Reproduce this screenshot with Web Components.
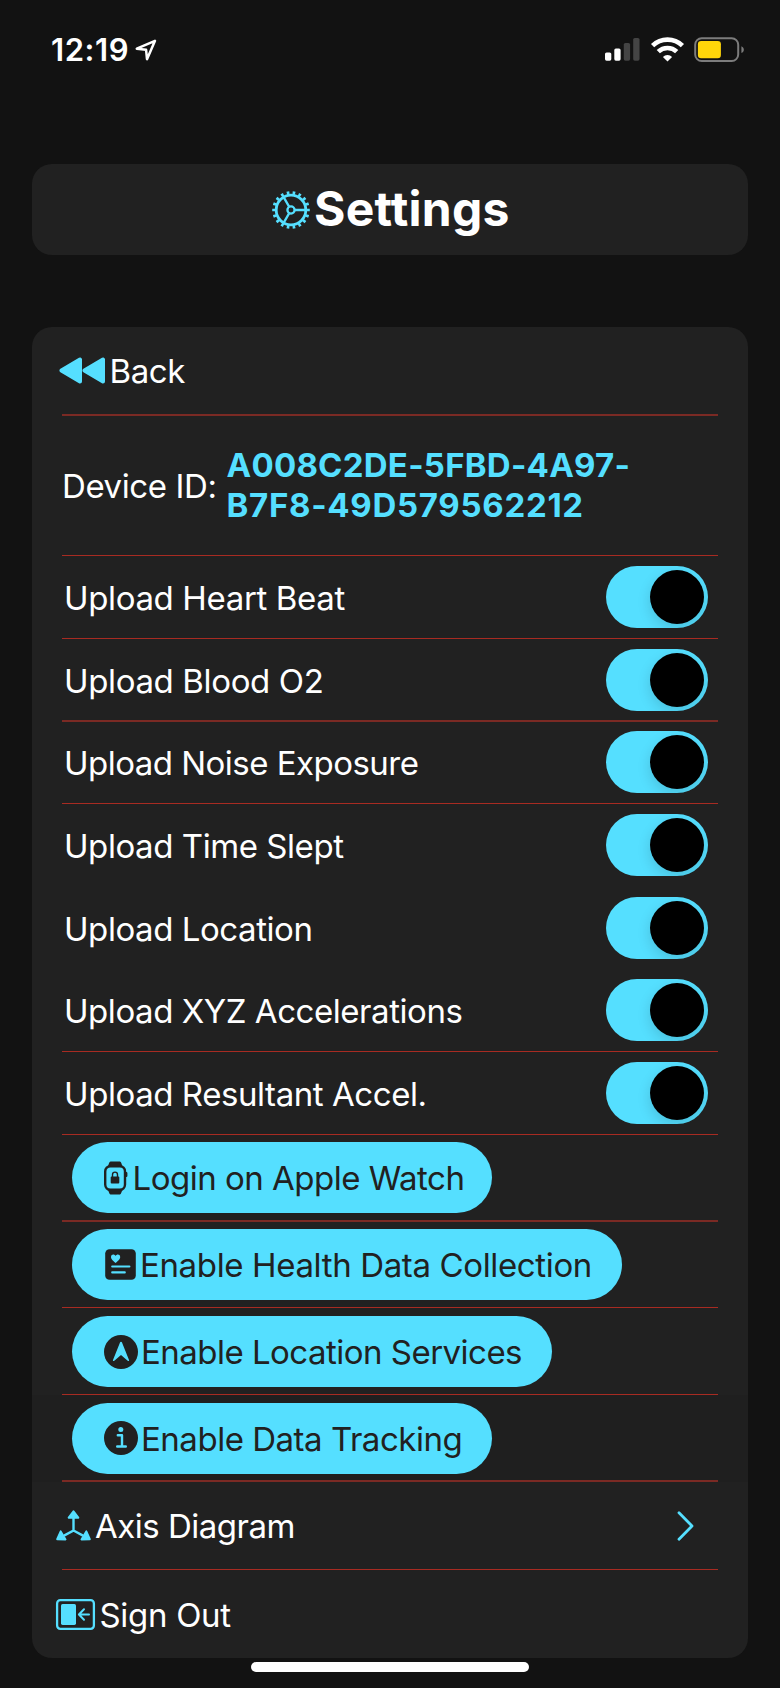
<!DOCTYPE html>
<html lang="en">
<head>
<meta charset="utf-8">
<title>Settings</title>
<style>
body{margin:0;background:#121212;font-family:Inter,"Liberation Sans",sans-serif;color:#fff}
</style>
</head>
<body>
<settings-screen></settings-screen>
<script>
const define = (name, markup) => customElements.define(name, class extends HTMLElement {
  connectedCallback() {
    if (this.shadowRoot) return;
    const root = this.attachShadow({mode: 'open'});
    const t = document.createElement('template');
    t.innerHTML = typeof markup === 'function' ? markup(this) : markup;
    root.append(t.content.cloneNode(true));
  }
});

// name: [width, height, svg body]; one user unit is one pixel
const ICONS = {
  location: [22, 22, '<path d="M20 1.8 1.8 9.7 11.1 10.8 12 20.2Z" fill="none" stroke="currentColor" stroke-width="2.5" stroke-linejoin="round"/>'],
  signal: [35, 23, '<rect x="0" y="14.5" width="6.3" height="8.2" rx="1.6"/><rect x="9.3" y="10.5" width="6.3" height="12.2" rx="1.6"/><g fill="#444"><rect x="18.8" y="5" width="6.3" height="17.7" rx="1.6"/><rect x="28.2" y="0" width="6.3" height="22.7" rx="1.6"/></g>'],
  wifi: [33, 25, '<g fill="none" stroke="currentColor" stroke-width="4.6"><path d="M1.6 8.7a21.3 21.3 0 0 1 29.8 0"/><path d="M7.3 14.7a13.2 13.2 0 0 1 18.4 0"/></g><path d="M16.5 24.6 11.9 19.9a6.8 6.8 0 0 1 9.2 0Z"/>'],
  battery: [51, 26, '<rect x="1.2" y="1.2" width="43" height="22.8" rx="6.5" fill="none" stroke="#7c7c7c" stroke-width="2"/><rect x="3.9" y="4" width="23" height="17.2" rx="3.2" fill="#ffd60a"/><path d="M47.4 9.2v6.9c3.3-1.4 3.3-5.5 0-6.9Z" fill="#7c7c7c"/>'],
  gear: [38, 38, '<g fill="none" stroke="currentColor"><circle cx="19" cy="19" r="14.8" stroke-width="2.8"/><circle cx="19" cy="19" r="17.2" stroke-width="3.2" pathLength="180" stroke-dasharray="4.4 5.6" stroke-dashoffset="2.2"/><circle cx="19" cy="19" r="3.6" stroke-width="2.3"/><path d="M22.8 19H34M17.1 15.7 11.6 6.2M17.1 22.3 11.6 31.8" stroke-width="2.3"/></g>'],
  rewind: [46, 27, '<g stroke="currentColor" stroke-width="4" stroke-linejoin="round"><path d="M2.4 13.5 21 2.6v21.8Z"/><path d="M25.4 13.5 44 2.6v21.8Z"/></g>'],
  watch: [24, 34, '<path d="M6.5.6h9.4c1.3 0 1.5 2.4 2.8 5.1H3.7C5 3 5.2.6 6.5.6ZM3.7 28.3h15c-1.3 2.7-1.5 5.1-2.8 5.1H6.5c-1.3 0-1.5-2.4-2.8-5.1Z"/><rect x="1.2" y="5.2" width="19.8" height="23.6" rx="5.2" fill="none" stroke="currentColor" stroke-width="2.4"/><rect x="21.2" y="11" width="2.2" height="5" rx="1"/><rect x="6.7" y="15.6" width="8.6" height="6.9" rx="1"/><path d="M8.5 16v-2.3c0-3.4 5-3.4 5 0V16" fill="none" stroke="currentColor" stroke-width="1.4"/>'],
  health: [31, 31, '<rect x=".2" y=".2" width="30.6" height="30.6" rx="4.3"/><g stroke="#55dfff" stroke-width="2.1" stroke-linecap="round"><path d="M7.2 17.5h17.2M7.2 23.4h12.6"/></g><path d="M10.6 13.9C7 11.2 6 9.6 6 8c0-2.8 3.5-3.3 4.6-.9 1.1-2.4 4.6-1.9 4.6.9 0 1.6-1 3.2-4.6 5.9Z" fill="#55dfff"/>'],
  locate: [34, 34, '<circle cx="17" cy="17" r="17"/><path d="M17 6.8c.5 0 .8.3 1 .8l7 17.3c.4 1-.5 1.6-1.3.9L17 20l-6.7 5.8c-.8.7-1.7.1-1.3-.9L16 7.600c.2-.5.5-.8 1-.8Z" fill="#55dfff"/>'],
  info: [34, 34, '<circle cx="17" cy="17" r="17"/><circle cx="16.8" cy="8.6" r="2.5" fill="#55dfff"/><path d="M13.8 14.200h4.200v11.300M13.200 25.500h8.600" fill="none" stroke="#55dfff" stroke-width="2.4" stroke-linecap="round" stroke-linejoin="round"/>'],
  axis: [36, 31, '<path d="M17.5 8v12.5L8 25.6M17.5 20.5 27 25.6" fill="none" stroke="currentColor" stroke-width="2.4"/><g stroke="currentColor" stroke-width="2" stroke-linejoin="round"><path d="M17.5 1.3 12.700 7.700h9.600Z"/><path d="M1.200 29.200 4.700 21.400 9.500 29.500Z"/><path d="M33.800 29.200 30.300 21.400 25.500 29.500Z"/></g>'],
  signout: [39, 31, '<rect x="1.100" y="1.200" width="36.800" height="28.600" rx="3.200" fill="none" stroke="currentColor" stroke-width="2.300"/><rect x="5" y="5.100" width="15" height="20.800" rx="1.600"/><path d="M33 15.500H23.300M28 10.300 22.900 15.500 28 20.700" fill="none" stroke="currentColor" stroke-width="2" stroke-linecap="round" stroke-linejoin="round"/>'],
  chevron: [18, 30, '<path d="M2 1.800 15 15 2 28.200" fill="none" stroke="currentColor" stroke-width="2.800" stroke-linecap="round" stroke-linejoin="round"/>']
};

define('ui-icon', el => {
  const [w, h, body] = ICONS[el.getAttribute('name')];
  return `<style>:host{display:block;flex:none;width:${w}px;height:${h}px}svg{display:block;overflow:visible}</style>
  <svg width="${w}" height="${h}" viewBox="0 0 ${w} ${h}" fill="currentColor">${body}</svg>`;
});

define('status-bar', `<style>
  :host{display:flex;box-sizing:border-box;height:164px;padding:32px 35px 0 51px;align-items:flex-start}
  .time{font-size:31px;font-weight:600;letter-spacing:.6px;line-height:36px;width:84px;white-space:nowrap}
  .loc{margin-top:7px}
  .right{display:flex;margin-left:auto;margin-top:5px}
  .sig{margin-top:1px}.wifi{margin-left:10.5px}.bat{margin-left:10.5px}
  </style>
  <div class="time">12:19</div><ui-icon class="loc" name="location"></ui-icon>
  <div class="right"><ui-icon class="sig" name="signal"></ui-icon><ui-icon class="wifi" name="wifi"></ui-icon><ui-icon class="bat" name="battery"></ui-icon></div>`);

define('title-card', `<style>
  :host{display:flex;align-items:center;box-sizing:border-box;height:91px;margin:0 32px 72px;padding-left:240px;background:#212121;border-radius:20px}
  ui-icon{color:#55dfff}
  h1{margin:-2px 0 0 4px;font-size:48px;line-height:58px;font-weight:700;letter-spacing:.25px}
  </style><ui-icon name="gear"></ui-icon><h1><slot></slot></h1>`);

define('settings-card', `<style>
  :host{display:block;box-sizing:border-box;height:1331px;margin:0 32px;background:#212121;border-radius:20px;overflow:hidden}
  </style><slot></slot>`);

// Row shell shared by every list entry; the rule is inset 30px from the card edges
const ROW = `:host{display:block;box-sizing:border-box;padding:0 30px;height:var(--h)}
  .row{display:flex;align-items:center;box-sizing:border-box;height:100%;border-bottom:var(--rule,0 solid transparent)}
  .label{font-size:33px;line-height:40px;white-space:nowrap;letter-spacing:var(--ls)}`;

define('nav-row', el => `<style>${ROW}
  ui-icon{color:#55dfff;margin-left:var(--ix);margin-top:var(--iy,0)}
  .label{margin-left:var(--gap);margin-top:var(--ty,0)}
  .go{margin-left:auto;margin-right:23px;margin-top:0}
  </style><div class="row"><ui-icon name="${el.getAttribute('icon')}"></ui-icon><span class="label"><slot></slot></span>${el.hasAttribute('chevron') ? '<ui-icon class="go" name="chevron"></ui-icon>' : ''}</div>`);

define('device-row', `<style>${ROW}
  .id{margin:-1px 0 0 10px;color:#55dfff;font-size:33px;line-height:40px;font-weight:700;white-space:nowrap}
  .id div:first-child{letter-spacing:.24px}.id div:last-child{letter-spacing:.7px}
  </style><div class="row"><span class="label">Device ID:</span><div class="id"><div>A008C2DE-5FBD-4A97-</div><div>B7F8-49D579562212</div></div></div>`);

define('toggle-switch', `<style>
  :host{display:flex;flex:none;box-sizing:border-box;justify-content:flex-end;padding:4px;width:102px;height:62px;border-radius:31px;background:#55dfff;overflow:hidden}
  i{display:block;width:54px;height:54px;border-radius:50%;background:#000;box-shadow:0 5px 14px rgba(0,0,0,.14)}
  </style><i></i>`);

define('toggle-row', `<style>${ROW}
  .row{align-items:flex-start;padding:var(--pt,10px) 10px 0 2px;justify-content:space-between}
  .label{margin-top:12px}
  </style><div class="row"><span class="label"><slot></slot></span><toggle-switch></toggle-switch></div>`);

define('button-row', el => `<style>${ROW}
  .row{align-items:flex-start;padding:var(--pt,7px) 10px 0}
  button{display:flex;align-items:center;box-sizing:border-box;height:71px;width:var(--w);padding:0 0 0 var(--px,32px);border:0;border-radius:35.5px;background:#55dfff;color:#212121;font:inherit}
  .label{margin-left:var(--gap)}
  ui-icon{margin-top:var(--iy,0)}
  </style><div class="row"><button><ui-icon name="${el.getAttribute('icon')}"></ui-icon><span class="label"><slot></slot></span></button></div>`);

define('home-indicator', `<style>:host{display:block;width:278px;height:10px;margin:4px auto 0;border-radius:5px;background:#fff}</style>`);

define('settings-screen', `<style>
  :host{display:block;width:780px;height:1688px;overflow:hidden;background:#121212}
  .a{--rule:1px solid #a82b22}.b{--rule:2px solid #7b2a24}
  .dim{background:#1f1f1f}
  </style>
  <status-bar></status-bar>
  <title-card>Settings</title-card>
  <settings-card>
    <nav-row class="b" icon="rewind" style="--h:89px;--ix:-3px;--gap:4.5px;--ls:-.4px;--ty:1px">Back</nav-row>
    <device-row class="a" style="--h:140px;--ls:-.4px"></device-row>
    <toggle-row class="a" style="--h:83px;--ls:-.36px">Upload Heart Beat</toggle-row>
    <toggle-row class="b" style="--h:83px;--ls:-.36px">Upload Blood O2</toggle-row>
    <toggle-row class="a" style="--h:82px;--ls:-.52px;--pt:9px">Upload Noise Exposure</toggle-row>
    <toggle-row style="--h:82px;--ls:-.44px">Upload Time Slept</toggle-row>
    <toggle-row style="--h:83px;--ls:-.44px;--pt:11px">Upload Location</toggle-row>
    <toggle-row class="a" style="--h:83px;--ls:-.45px">Upload XYZ Accelerations</toggle-row>
    <toggle-row class="a" style="--h:83px;--ls:-.43px">Upload Resultant Accel.</toggle-row>
    <button-row class="b" icon="watch" style="--h:87px;--w:420px;--ls:-.5px;--gap:4.5px">Login on Apple Watch</button-row>
    <button-row class="a" icon="health" style="--h:86px;--w:550px;--ls:-.36px;--gap:4px;--px:33px">Enable Health Data Collection</button-row>
    <button-row class="a" icon="locate" style="--h:87px;--w:480px;--ls:-.52px;--gap:3px;--pt:8px">Enable Location Services</button-row>
    <button-row class="b dim" icon="info" style="--h:87px;--w:420px;--ls:-.48px;--gap:3px;--pt:8px;--iy:-1px">Enable Data Tracking</button-row>
    <nav-row class="a" icon="axis" chevron style="--h:88px;--ix:-6.5px;--gap:3.5px;--ls:-.5px;--ty:1px">Axis Diagram</nav-row>
    <nav-row icon="signout" style="--h:88px;--ix:-6px;--gap:4.5px;--ls:-.3px;--ty:1px">Sign Out</nav-row>
  </settings-card>
  <home-indicator></home-indicator>`);
</script>
</body>
</html>
